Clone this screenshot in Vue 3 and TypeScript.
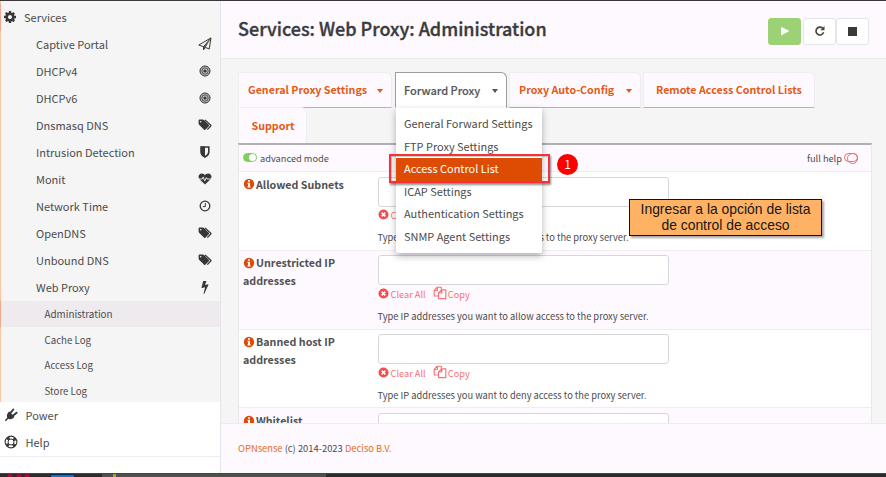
<script setup lang="ts">
interface MenuItem { label: string; icon: string }
interface Tab { label: string; cls: string; caret: boolean }
interface Field { label: string; help: string }

const menu: MenuItem[] = [
  { label: 'Captive Portal', icon: 'plane' },
  { label: 'DHCPv4', icon: 'bullseye' },
  { label: 'DHCPv6', icon: 'bullseye' },
  { label: 'Dnsmasq DNS', icon: 'tags' },
  { label: 'Intrusion Detection', icon: 'shield' },
  { label: 'Monit', icon: 'heart' },
  { label: 'Network Time', icon: 'clock' },
  { label: 'OpenDNS', icon: 'tags' },
  { label: 'Unbound DNS', icon: 'tags' },
  { label: 'Web Proxy', icon: 'bolt' },
]
const subMenu: string[] = ['Administration', 'Cache Log', 'Access Log', 'Store Log']
const tabs: Tab[] = [
  { label: 'General Proxy Settings', cls: 'general', caret: true },
  { label: 'Forward Proxy', cls: 'forward', caret: true },
  { label: 'Proxy Auto-Config', cls: 'auto', caret: true },
  { label: 'Remote Access Control Lists', cls: 'remote', caret: false },
]
const options: string[] = [
  'General Forward Settings', 'FTP Proxy Settings', 'Access Control List',
  'ICAP Settings', 'Authentication Settings', 'SNMP Agent Settings',
]
const fields: Field[] = [
  { label: 'Allowed Subnets', help: 'Type subnets you want to allow access to the proxy server.' },
  { label: 'Unrestricted IP addresses', help: 'Type IP addresses you want to allow access to the proxy server.' },
  { label: 'Banned host IP addresses', help: 'Type IP addresses you want to deny access to the proxy server.' },
  { label: 'Whitelist', help: '' },
]
</script>

<template>
  <div class="screen">
    <svg width="0" height="0" class="defs">
      <symbol id="cog" viewBox="0 0 1792 1792"><path fill="currentColor" d="M1152 896q0-106-75-181t-181-75-181 75-75 181 75 181 181 75 181-75 75-181zm512-109v222q0 12-8 23t-20 13l-185 28q-19 54-39 91 35 50 107 138 10 12 10 25t-9 23q-27 37-99 108t-94 71q-12 0-26-9l-138-108q-44 23-91 38-16 136-29 186-7 28-36 28h-222q-14 0-24.500-8.500t-11.500-21.500l-28-184q-49-16-90-37l-141 107q-10 9-25 9-14 0-25-11-126-114-165-168-7-10-7-23 0-12 8-23 15-21 51-66.500t54-70.500q-27-50-41-99l-183-27q-13-2-21-12.500t-8-23.500v-222q0-12 8-23t19-13l186-28q14-46 39-92-40-57-107-138-10-12-10-24 0-10 9-23 26-36 98.500-107.500t94.500-71.500q13 0 26 10l138 107q44-23 91-38 16-136 29-186 7-28 36-28h222q14 0 24.500 8.500t11.500 21.500l28 184q49 16 90 37l142-107q9-9 24-9 13 0 25 10 129 119 165 170 7 8 7 22 0 12-8 23-15 21-51 66.500t-54 70.500q26 50 41 98l183 28q13 2 21 12.500t8 23.500z" /></symbol>
      <symbol id="plane" viewBox="0 0 14 14"><path d="M.8 8 13 .9 11.200 12 7.600 10.500 5.500 12.800V9.700Z" fill="none" stroke="currentColor" stroke-width="1" stroke-linejoin="round" /><path d="M5.500 9.700 13 1 7.600 10.500 5.500 13Z" fill="currentColor" fill-opacity=".8" /><path d="M13 1 5.500 9.700V13" fill="none" stroke="currentColor" stroke-width=".9" /></symbol>
      <symbol id="bullseye" viewBox="0 0 14 14"><circle cx="7" cy="7" r="5" fill="none" stroke="currentColor" stroke-width="1" /><circle cx="7" cy="7" r="3.200" fill="none" stroke="currentColor" stroke-width=".8" /><circle cx="7" cy="7" r="5.300" fill="currentColor" opacity=".28" /><circle cx="7" cy="7" r="1.600" fill="currentColor" /></symbol>
      <symbol id="tags" viewBox="0 0 14 14"><path fill="currentColor" fill-rule="evenodd" d="M.6 2.500Q.6 1.600 1.500 1.600H4.800Q5.700 1.600 6.300 2.200L11 6.900Q11.500 7.500 11 8.100L7.300 11.800Q6.700 12.300 6.100 11.800L1.300 7Q.6 6.300.6 5.400ZM1.900 3.700A.8.8 0 1 0 3.500 3.700.8.8 0 1 0 1.900 3.700" /><path fill="none" stroke="currentColor" stroke-width="1.200" d="M7 1.900 12.800 7.200Q13.200 7.600 12.800 8L9.300 11.600" /></symbol>
      <symbol id="shield" viewBox="0 0 14 14"><path d="M3.200 2H10.800V7Q10.800 10 7 12 3.200 10 3.200 7Z" fill="none" stroke="currentColor" stroke-width="1.600" /><path d="M2.600 1.500H7V12.500Q2.600 10.500 2.600 7Z" fill="currentColor" /></symbol>
      <symbol id="heart" viewBox="0 0 14 14"><path fill="currentColor" d="M7 12.600 1.700 7.500C-.8 4.500 1 1.500 3.900 1.500 5.400 1.500 6.400 2.400 7 3.200 7.600 2.400 8.600 1.500 10.100 1.500 13 1.500 14.800 4.500 12.300 7.500Z" /><path fill="none" stroke="#f5f5f5" stroke-width=".9" d="M1 7H4.200L5.200 4.900 6.700 9 8.300 5.600 9 7H13" /></symbol>
      <symbol id="clock" viewBox="0 0 14 14"><circle cx="7" cy="7" r="4.800" fill="none" stroke="currentColor" stroke-width="1.300" /><path d="M7.300 4V7.600H4.900" fill="none" stroke="currentColor" stroke-width="1" /></symbol>
      <symbol id="bolt" viewBox="0 0 1792 1792"><path fill="currentColor" d="M1333 566q18 20 7 44l-540 1157q-13 25-42 25-4 0-14-2-17-5-25.500-19t-4.500-30l197-808-406 101q-4 1-12 1-18 0-31-11-18-15-13-39l201-825q4-14 16-23t28-9h328q19 0 32 12.500t13 29.500q0 8-5 18l-171 463 396-98q8-2 12-2 19 0 34 15z" /></symbol>
      <symbol id="plug" viewBox="0 0 14 14"><path fill="currentColor" d="M5.200 3.500 10.500 8.800 9.300 10Q7 12.200 4.300 10.800L1.800 13.200.8 12.200 3.200 9.800Q1.900 7 4 4.700Z" /><path d="M6.500 4.800 9.300 1.500M9.200 7.500 12.600 4.700" stroke="currentColor" stroke-width="1.900" stroke-linecap="round" /></symbol>
      <symbol id="ring" viewBox="0 0 14 14"><circle cx="7" cy="7" r="5.900" fill="none" stroke="currentColor" stroke-width="1.100" /><circle cx="7" cy="7" r="3" fill="none" stroke="currentColor" stroke-width="1" /><circle cx="7" cy="7" r="4.500" fill="none" stroke="currentColor" stroke-width="2.600" stroke-dasharray="3 4.069" stroke-dashoffset="-2.030" /></symbol>
      <symbol id="info" viewBox="0 0 12 12"><circle cx="6" cy="6" r="5.200" fill="currentColor" /><path d="M5 2.200H7V3.700H5ZM4.500 4.700H7V8.400H7.700V9.600H4.400V8.400H5.100V5.800H4.500Z" fill="#fff" /></symbol>
      <symbol id="times" viewBox="0 0 12 12"><circle cx="6" cy="6" r="5.500" fill="currentColor" /><path d="M4 4 8 8M8 4 4 8" stroke="#fff" stroke-width="1.700" /></symbol>
      <symbol id="copy" viewBox="0 0 14 14"><path d="M5.500 10H1.200V4.300L4.200 1.200H8.300V3.800M4.400 1.200V4.500H1.200M5.500 7 8.700 3.800H12.800V12.600H5.500ZM8.800 3.800V7H5.500" fill="none" stroke="currentColor" stroke-width="1.150" stroke-linejoin="round" /></symbol>
      <symbol id="redo" viewBox="0 0 12 12"><path d="M9.600 7.300A3.900 3.900 0 1 1 8.600 3.200" fill="none" stroke="currentColor" stroke-width="1.600" /><path d="M10.500 1.100V5.300H6.300Z" fill="currentColor" /></symbol>
    </svg>

    <div class="topline"></div>
    <div class="body">
      <nav class="side">
        <div class="group">
          <div class="head"><svg class="ic14"><use href="#cog" /></svg><span>Services</span></div>
          <div v-for="m in menu" :key="m.label" class="item">
            <span>{{ m.label }}</span><svg class="ic14"><use :href="'#' + m.icon" /></svg>
          </div>
          <div v-for="(s, i) in subMenu" :key="s" class="sub" :class="{ current: i === 0 }">{{ s }}</div>
        </div>
        <div class="root"><svg class="ic14"><use href="#plug" /></svg><span>Power</span></div>
        <div class="root last"><svg class="ic14"><use href="#ring" /></svg><span>Help</span></div>
      </nav>

      <main class="main">
        <header class="title">
          <h1>Services: Web Proxy: Administration</h1>
          <div class="btns">
            <button class="play"><svg width="10" height="10" viewBox="0 0 10 10"><path d="M1 .8 9.300 5 1 9.400Z" fill="#fff" /></svg></button>
            <button class="redo"><svg width="12" height="12"><use href="#redo" /></svg></button>
            <button class="stop"><i></i></button>
          </div>
        </header>

        <section class="content">
          <div class="tabs">
            <div v-for="t in tabs" :key="t.label" class="tab" :class="t.cls">
              <span>{{ t.label }}</span><i v-if="t.caret" class="caret"></i>
              <div v-if="t.cls === 'forward'" class="menu">
                <div v-for="o in options" :key="o" class="opt" :class="{ on: o === 'Access Control List' }">{{ o }}</div>
                <div class="mark"></div>
              </div>
            </div>
          </div>
          <div class="tabs second"><div class="tab support"><span>Support</span></div></div>

          <div class="panel">
            <div class="bar">
              <div class="adv"><i class="toggle green"></i><span>advanced mode</span></div>
              <div class="full"><span>full help</span><i class="toggle red"></i></div>
            </div>
            <div v-for="f in fields" :key="f.label" class="row">
              <div class="label"><svg class="info"><use href="#info" /></svg>{{ f.label }}</div>
              <div class="value">
                <div class="input"></div>
                <template v-if="f.help">
                  <div class="links">
                    <svg class="x"><use href="#times" /></svg><span class="clear">Clear All</span>
                    <svg class="ic14"><use href="#copy" /></svg><span>Copy</span>
                  </div>
                  <div class="help">{{ f.help }}</div>
                </template>
              </div>
            </div>
          </div>
        </section>

        <footer class="foot"><span><b>OPNsense</b> (c) 2014-2023 <b>Deciso B.V.</b></span></footer>
      </main>
    </div>
    <div class="task"><i class="dots"></i><i class="blue"></i><i class="strip"></i></div>

    <div class="badge">1</div>
    <div class="callout"><span>Ingresar a la opción de lista</span><span>de control de acceso</span></div>
  </div>
</template>

<style>
body { margin: 0; overflow: hidden; }
</style>

<style scoped>
* { box-sizing: border-box; }
.screen { position: relative; width: 886px; height: 477px; display: flex; flex-direction: column; overflow: hidden; font-family: "Noto Sans CJK SC", "Noto Sans", sans-serif; color: #4c4c4c; background: #fff; font-size: 11px; white-space: nowrap; }
.defs { position: absolute; }
.topline { height: 1px; flex: none; background: #3a383b; }
.body { display: flex; height: 472px; flex: none; }
.ic14 { width: 14px; height: 14px; flex: none; display: block; color: #373737; }
.side { width: 221px; border-right: 1px solid #e6e4e8; background: #fff; flex: none; }
.group { height: 401px; background: #f5f5f5; border-left: 1px solid #fac6a0; padding-top: 3px; }
.head { height: 27px; display: flex; align-items: center; gap: 7px; padding: 0 0 1px 2px; margin-left: -1px; border-left: 1px solid #eda98d; }
.item { height: 27px; display: flex; align-items: center; justify-content: space-between; padding: 0 8px 1px 35px; }
.sub { height: 25.300px; line-height: 26px; padding-left: 43.500px; font-size: 9.700px; }
.sub.current { background: #eeeaee; margin-left: -1px; border-left: 1px solid #eda98d; height: 26px; line-height: 26px; font-size: 9.850px; }
.root { height: 27px; display: flex; align-items: center; padding: 0 0 1px 4px; gap: 7.500px; }
.root.last { height: 28px; padding-bottom: 2px; border-bottom: 1px solid #eeedef; }
.main { flex: 1; min-width: 0; display: flex; flex-direction: column; }
.title { height: 58px; flex: none; border-bottom: 1px solid #ececef; background: #fdf9ff; display: flex; justify-content: space-between; align-items: flex-start; padding: 0 17px 0 17px; }
h1 { margin: 0; font-size: 18px; font-weight: 500; color: #3b3b3b; line-height: 55px; -webkit-text-stroke: .35px #3b3b3b; }
.btns { display: flex; padding-top: 17px; }
button { width: 33px; height: 27px; border: 1px solid #e7e4e9; border-radius: 3px; background: #fff; padding: 0 0 1px; display: flex; align-items: center; justify-content: center; color: #444; }
.play { background: #9cd275; border-color: #9cd275; margin-right: 2px; }
.stop i { width: 9px; height: 9px; background: #3a3a3a; }
.content { height: 364px; overflow: hidden; background: #f5f5f5; padding: 13px 14px 0 17px; flex: none; }
.tabs { display: flex; height: 36px; }
.tab { position: relative; height: 36px; flex: none; background: #fdf9ff; border: 1px solid #f0edf2; border-bottom-color: #b5b3b7; border-radius: 0 6px 0 0; display: flex; align-items: center; justify-content: space-between; color: #e35a16; font-weight: 700; font-size: 10.700px; padding: 0 8px 1px 9px; }
.general { width: 154px; margin-right: 3px; }
.forward { width: 112px; margin-right: 2px; background: #fff; border-color: #9c9c9c; border-bottom-color: #fff; color: #555; font-weight: 500; font-size: 11px; padding-left: 8px; -webkit-text-stroke: .15px #555; }
.auto { width: 132px; margin-right: 2px; }
.remote { width: 172px; padding: 0 12px 1px; }
.support { width: 69px; padding: 0 12.500px; border-bottom: 0; margin-top: -1px; }
.second { height: 35px; }
.caret { border: 3.500px solid transparent; border-top: 4px solid currentColor; border-bottom: 0; margin-top: 3px; }
.panel { width: 634px; border-top: 2px solid #b1afb3; border-right: 1px solid #eae8ec; border-left: 1px solid #eae8ec; background: #fff; }
.bar { height: 26px; display: flex; justify-content: space-between; align-items: center; padding: 0 13px 0 4px; font-size: 9.250px; background: #fdf9ff; }
.adv, .full { display: flex; align-items: center; gap: 3px; }
.full { gap: 2px; }
.toggle { width: 14px; height: 9px; border: 1px solid; border-radius: 5px; position: relative; display: block; }
.full .toggle { margin-top: -2px; }
.adv .toggle { margin-top: -1px; }
.toggle::after { content: ''; position: absolute; width: 7px; height: 7px; border-radius: 50%; top: 0; }
.green { color: #83ce61; background: #83ce61; }
.green::after { right: 0; background: #fff; }
.red { color: #f56b6d; }
.red::after { left: 2px; top: -1px; width: 9px; height: 9px; border: 1px solid; }
.row { height: 78.800px; border-top: 1px solid #f0edf2; display: flex; padding-left: 4px; background: #fff; }
.row:nth-child(odd) { background: #fdf9ff; }
.label { width: 134.500px; padding-right: 20px; padding-top: 3.700px; white-space: normal; font-weight: 700; line-height: 17.500px; font-size: 10.700px; color: #505050; flex: none; }
.info { width: 12px; height: 12px; color: #dc4b08; vertical-align: -1.500px; margin-right: 1.500px; margin-left: -.5px; }
.value { padding-top: 4.500px; }
.input { width: 291px; height: 30px; border: 1px solid #d8d6da; border-radius: 3px; background: #fff; }
.links { height: 17px; display: flex; align-items: center; color: #f87378; font-size: 9.250px; }
.links .ic14 { color: #f87378; margin: -2px 1px 0 0; }
.x { width: 11px; height: 11px; margin: -1px 2px 0 0; color: #f34d50; }
.clear { margin-right: 7px; }
.help { font-size: 9.300px; line-height: 14px; margin-top: 6.800px; }
.foot { flex: 1; border-top: 1px solid #efecf1; background: #fdf9ff; padding-left: 17px; font-size: 9.400px; line-height: 48px; }
.foot b { font-weight: 400; color: #e76b23; }
.menu { position: absolute; z-index: 2; left: 0; top: 35px; width: 146px; height: 145px; padding-top: 5px; background: #fff; box-shadow: 0 3px 7px rgba(0, 0, 0, .3); border-radius: 0 0 2px 2px; color: #4c4c4c; font-weight: 400; font-size: 10.950px; -webkit-text-stroke: 0; }
.opt { height: 22.600px; line-height: 21.600px; padding-left: 8px; }
.opt.on { background: #de4c04; color: #fff; }
.mark { position: absolute; left: -7px; top: 46px; width: 161px; height: 29px; border: 2px solid #f43339; box-shadow: 1px 2px 2px rgba(0, 0, 0, .45), inset 1px 1px 1px rgba(0, 0, 0, .2); }
.badge { position: absolute; left: 557px; top: 154px; width: 21px; height: 21px; border-radius: 50%; background: #fe0000; color: #fff; text-align: center; line-height: 20px; font-size: 12px; }
.callout { position: absolute; left: 629px; top: 199px; width: 193px; height: 37px; border: 1.500px solid #1a1208; background: #ffb264; box-shadow: 2px 2px 2px rgba(0, 0, 0, .35); color: #161616; font: 13.900px/16px "Liberation Sans", sans-serif; display: flex; flex-direction: column; align-items: center; padding-top: 1px; }
.task { height: 4px; background: #2b2c2d; display: flex; border-top: 1px solid #454548; }
.dots { width: 50px; background: radial-gradient(circle at 10px 2px, #b4003c 2px, transparent 3px), radial-gradient(circle at 19px 2px, #b4003c 2px, transparent 3px), radial-gradient(circle at 27px 2px, #b4003c 2px, transparent 3px); }
.blue { width: 25px; background: #0b76cc; border: 1px solid #06264c; border-bottom: 0; }
.strip { width: 224px; margin-left: 27px; background: linear-gradient(90deg, #4d504d 11px, #b0a028 11px, #b0a028 14px, #4d504d 14px); }
</style>
